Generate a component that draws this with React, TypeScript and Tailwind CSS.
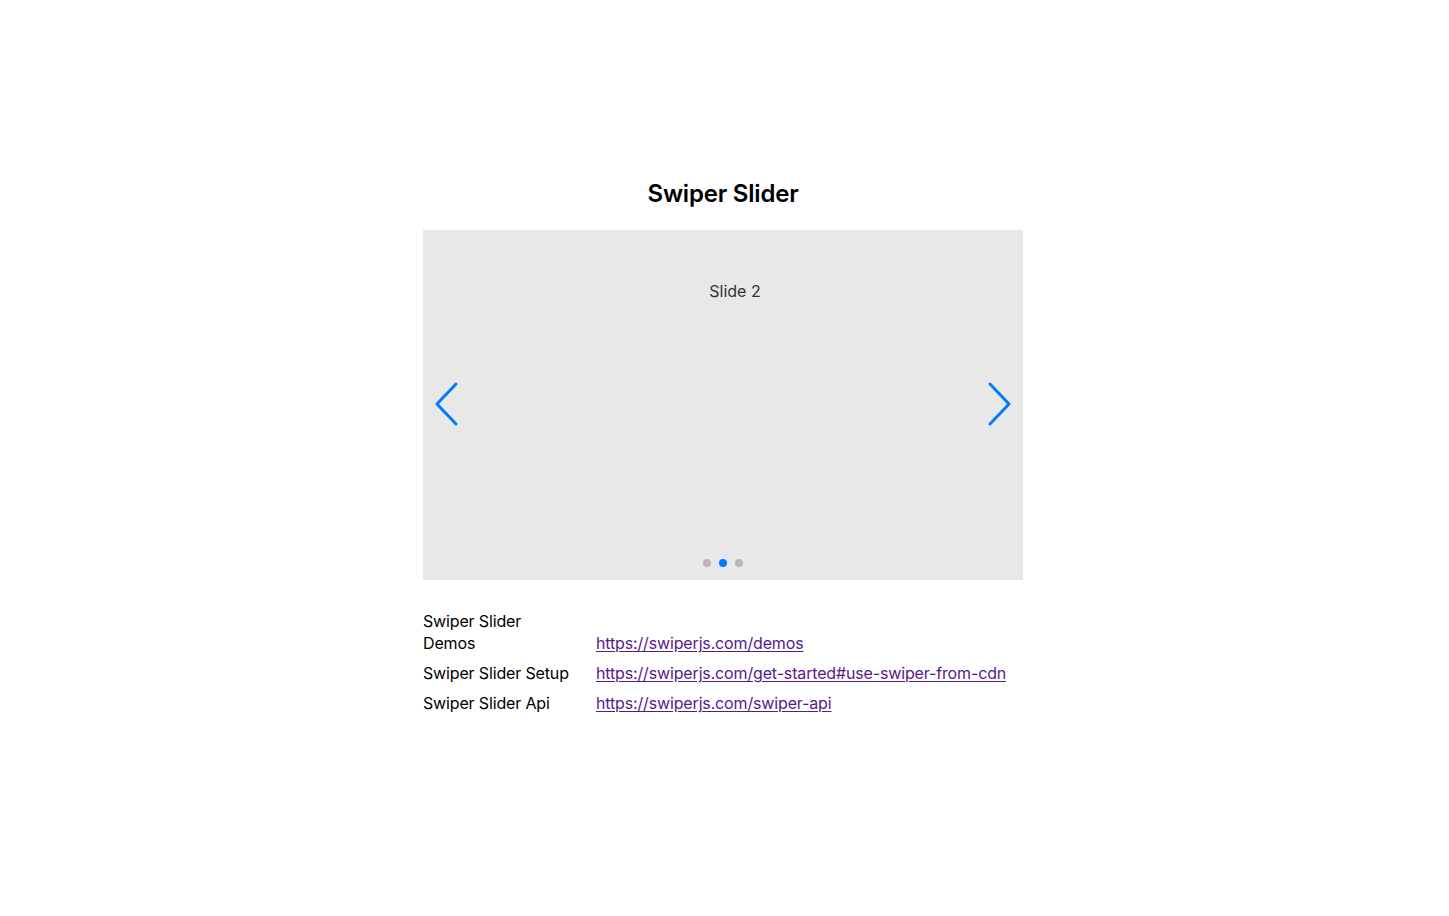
import React from 'react';

const links = [
  { label: ['Swiper Slider', 'Demos'], href: 'https://swiperjs.com/demos' },
  { label: ['Swiper Slider Setup'], href: 'https://swiperjs.com/get-started#use-swiper-from-cdn' },
  { label: ['Swiper Slider Api'], href: 'https://swiperjs.com/swiper-api' },
];

function Chevron({ dir }: { dir: 'left' | 'right' }) {
  return (
    <svg width="28" height="46" viewBox="0 0 28 46" fill="none" className="block">
      <path
        d={dir === 'left' ? 'M23 3 L4 23 L23 43' : 'M5 3 L24 23 L5 43'}
        stroke="#007aff"
        strokeWidth="3"
        strokeLinecap="round"
        strokeLinejoin="round"
      />
    </svg>
  );
}

export default function App() {
  return (
    <div className="min-h-[916px] w-full bg-white pr-[3px] font-['Inter','Liberation_Sans',sans-serif] text-black">
      <div className="mx-auto flex w-[600px] flex-col pt-[178px]">
        <h1 className="text-center text-[24px] font-semibold leading-[32px] tracking-[-0.2px]">Swiper Slider</h1>

        {/* Slider */}
        <div className="relative mt-[20px] h-[350px] w-full bg-[#e8e8e8]">
          <div className="flex justify-center pt-[50px] pl-[24px] text-[16px] leading-[22px] text-[#333]">
            Slide 2
          </div>
          <div className="absolute left-[10px] top-[151px]">
            <Chevron dir="left" />
          </div>
          <div className="absolute right-[10px] top-[151px]">
            <Chevron dir="right" />
          </div>
          <div className="absolute bottom-[13px] left-0 right-0 flex justify-center gap-[8px]">
            <span className="h-[8px] w-[8px] rounded-full bg-[#b8b8b8]" />
            <span className="h-[8px] w-[8px] rounded-full bg-[#007aff]" />
            <span className="h-[8px] w-[8px] rounded-full bg-[#b8b8b8]" />
          </div>
        </div>

        {/* Links */}
        <div className="mt-[30px] flex flex-col gap-[8px] text-[16px] leading-[22px] tracking-[-0.15px]">
          {links.map((l) => (
            <div key={l.href} className="flex items-end">
              <div className="w-[173px] shrink-0">
                {l.label.map((t) => (
                  <div key={t}>{t}</div>
                ))}
              </div>
              <a href={l.href} className="text-[#551a8b] underline underline-offset-2">
                {l.href}
              </a>
            </div>
          ))}
        </div>
      </div>
    </div>
  );
}
